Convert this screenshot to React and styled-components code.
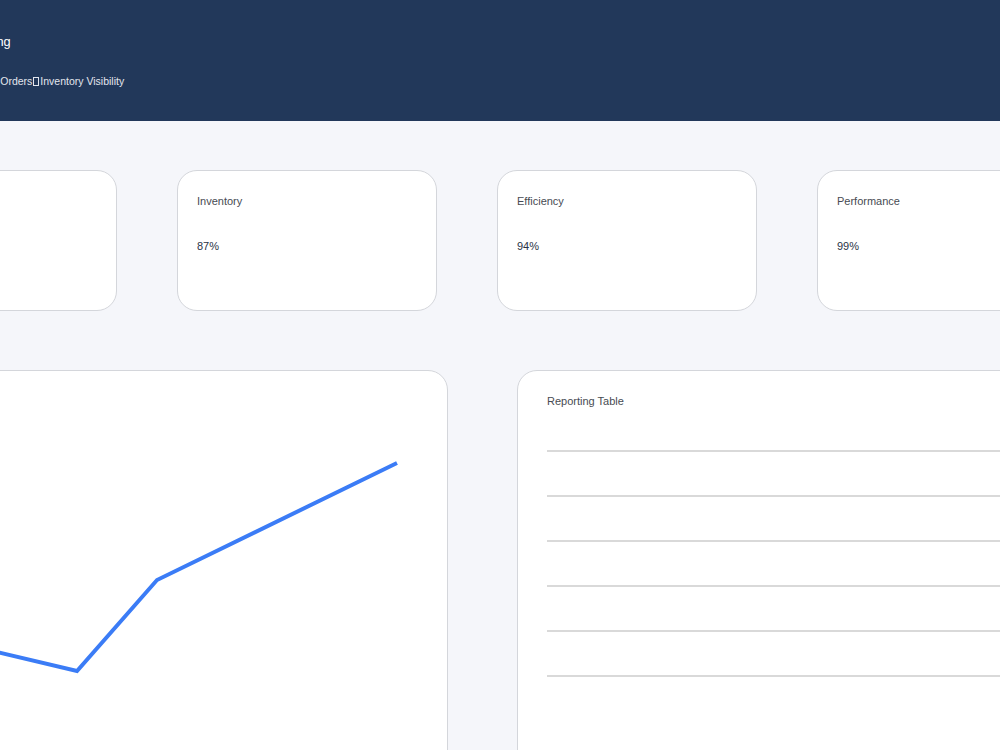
import styled, { createGlobalStyle } from 'styled-components'

const GlobalStyle = createGlobalStyle`
  html, body {
    margin: 0;
    padding: 0;
    background: #f5f6fa;
    overflow: hidden;
  }
  body {
    font-family: "Liberation Sans", Arial, sans-serif;
  }
`

const Shell = styled.div`
  width: 1220px;
  margin-left: -143px;
`

const Header = styled.header`
  height: 121px;
  box-sizing: border-box;
  padding-top: 34px;
  background: #22385a;
  margin: 0 -200px;
  padding-left: 200px;
`

const Title = styled.h1`
  margin: 0;
  font-size: 12.8px;
  line-height: 15px;
  font-weight: 400;
  color: #ffffff;
`

const Nav = styled.nav`
  margin-top: 26px;
  font-size: 10.5px;
  line-height: 13px;
  color: #e2e6ee;
  display: flex;
  align-items: center;
`

const Sep = styled.span`
  display: inline-block;
  width: 4px;
  height: 7px;
  border: 1px solid currentColor;
  margin: 0 1px;
`

const Main = styled.main`
  padding-top: 49px;
`

const CardGrid = styled.section`
  display: grid;
  grid-template-columns: repeat(4, 260px);
  gap: 60px;
`

const Card = styled.div`
  box-sizing: border-box;
  height: 141px;
  padding: 24px 19px;
  background: #fff;
  border: 1px solid #d4d6db;
  border-radius: 20px;
`

const Label = styled.div`
  font-size: 11px;
  line-height: 13px;
  color: #474b52;
`

const Value = styled.div`
  margin-top: 32px;
  font-size: 11px;
  line-height: 13px;
  color: #2a3346;
`

const Lower = styled.section`
  margin-top: 59px;
  display: grid;
  grid-template-columns: 591px 560px;
  gap: 69px;
`

const Panel = styled.div`
  box-sizing: border-box;
  height: 420px;
  background: #fff;
  border: 1px solid #d4d6db;
  border-radius: 20px;
  padding: ${p => (p.$flush ? '0' : '24px 29px')};
  overflow: hidden;
`

const Chart = styled.svg`
  display: block;
  width: 100%;
  height: 100%;
`

const TableTitle = styled(Label)`
  margin-bottom: -1px;
`

const Row = styled.div`
  box-sizing: border-box;
  height: 45px;
  border-bottom: 2px solid #d9d9d9;
`

const kpis = [
  { label: 'Orders', value: '72%' },
  { label: 'Inventory', value: '87%' },
  { label: 'Efficiency', value: '94%' },
  { label: 'Performance', value: '99%' },
]

// trend points in panel coordinates
const trend = [
  [60, 230],
  [140, 281],
  [220, 300],
  [300, 209],
  [540, 92],
]

export default function App() {
  return (
    <>
      <GlobalStyle />
      <Shell>
        <Header>
          <Title>Integrated Supply Planning</Title>
          <Nav>
            Overview<Sep />Demand Planning<Sep />Orders<Sep />Inventory Visibility
          </Nav>
        </Header>
        <Main>
          <CardGrid>
            {kpis.map(k => (
              <Card key={k.label}>
                <Label>{k.label}</Label>
                <Value>{k.value}</Value>
              </Card>
            ))}
          </CardGrid>
          <Lower>
            <Panel $flush>
              <Chart viewBox="0 0 589 418" preserveAspectRatio="none">
                <polyline
                  points={trend.map(([x, y]) => `${x - 1},${y}`).join(' ')}
                  fill="none"
                  stroke="#3b7cf6"
                  strokeWidth="4"
                />
              </Chart>
            </Panel>
            <Panel>
              <TableTitle>Reporting Table</TableTitle>
              {[0, 1, 2, 3, 4, 5].map(i => (
                <Row key={i} />
              ))}
            </Panel>
          </Lower>
        </Main>
      </Shell>
    </>
  )
}
